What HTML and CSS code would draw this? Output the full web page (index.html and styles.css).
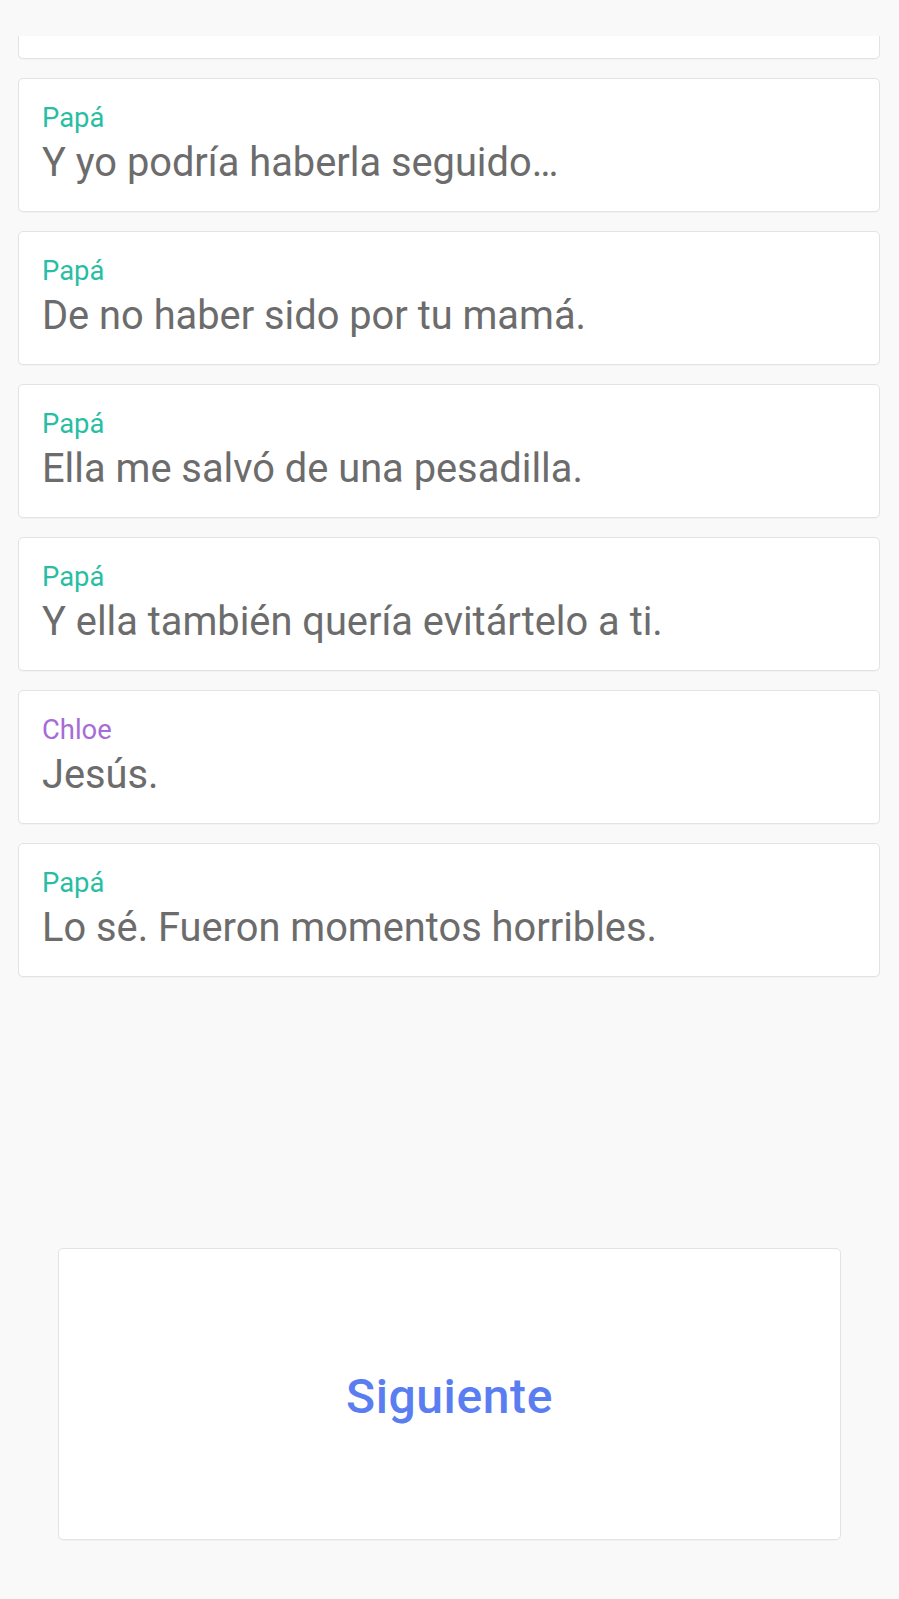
FILE: index.html
```html
<!DOCTYPE html>
<html lang="es">
<head>
<meta charset="utf-8">
<title>Chat</title>
<link rel="stylesheet" href="styles.css">
</head>
<body>
<div class="screen">
  <div class="log">
    <div class="card partial"></div>
    <div class="card">
      <div class="name papa">Papá</div>
      <div class="text">Y yo podría haberla seguido…</div>
    </div>
    <div class="card">
      <div class="name papa">Papá</div>
      <div class="text">De no haber sido por tu mamá.</div>
    </div>
    <div class="card">
      <div class="name papa">Papá</div>
      <div class="text">Ella me salvó de una pesadilla.</div>
    </div>
    <div class="card">
      <div class="name papa">Papá</div>
      <div class="text">Y ella también quería evitártelo a ti.</div>
    </div>
    <div class="card">
      <div class="name chloe">Chloe</div>
      <div class="text">Jesús.</div>
    </div>
    <div class="card">
      <div class="name papa">Papá</div>
      <div class="text">Lo sé. Fueron momentos horribles.</div>
    </div>
  </div>
  <div class="footer">
    <button class="next">Siguiente</button>
  </div>
</div>
</body>
</html>
```
FILE: styles.css
```css
html, body {
  margin: 0;
  padding: 0;
  background: #f9f9f9;
}
body {
  font-family: Roboto, "Noto Sans", "Liberation Sans", sans-serif;
}
.screen {
  height: 1599px;
  display: flex;
  flex-direction: column;
  overflow: hidden;
}
.log {
  flex: 1;
  margin-top: 36px;
  overflow: hidden;
  padding: 0 19px 0 18px;
}
.card {
  background: #ffffff;
  border: 1px solid #e3e3e3;
  border-radius: 5px;
  box-shadow: 0 1px 1px rgba(0, 0, 0, 0.03);
  padding: 23px 23px 25px;
  margin-bottom: 19px;
}
.card.partial {
  box-sizing: border-box;
  height: 134px;
  padding: 0;
  margin-top: -111px;
}
.name {
  font-size: 27.4px;
  line-height: 32px;
}
.name.papa {
  color: #27bea3;
}
.name.chloe {
  color: #a66cd7;
}
.text {
  margin-top: 5px;
  font-size: 39.8px;
  line-height: 47px;
  color: #6c6c6c;
}
.footer {
  padding: 0 58px 59px 58px;
}
.next {
  display: flex;
  align-items: center;
  justify-content: center;
  width: 100%;
  height: 292px;
  background: #ffffff;
  border: 1px solid #e3e3e3;
  border-radius: 5px;
  box-shadow: 0 1px 1px rgba(0, 0, 0, 0.03);
  font-family: Roboto, "Noto Sans", "Liberation Sans", sans-serif;
  font-weight: 500;
  font-size: 48px;
  letter-spacing: 0.6px;
  color: #5a7ef1;
  padding: 4px 0 0 0;
  margin: 0;
}
```
